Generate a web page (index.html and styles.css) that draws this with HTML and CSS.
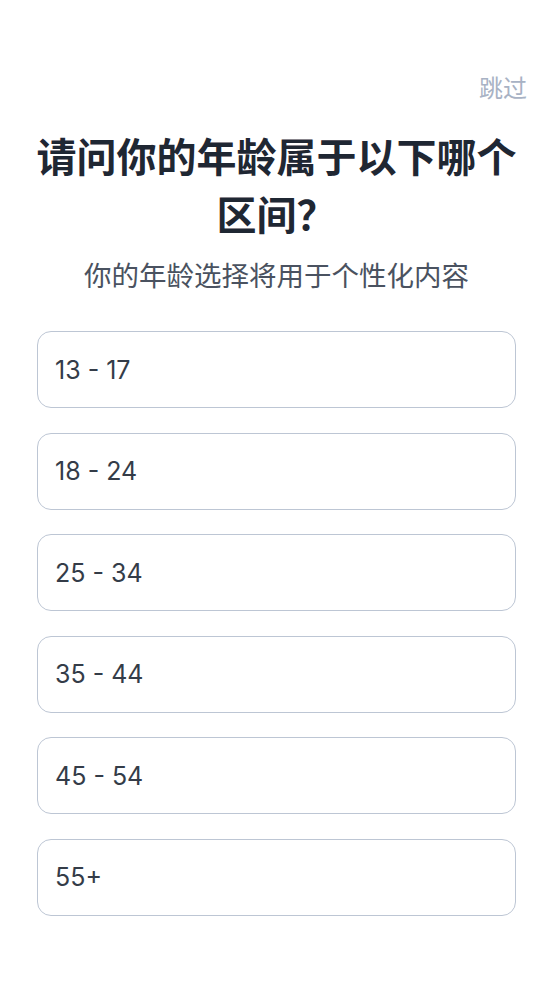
FILE: index.html
```html
<!DOCTYPE html>
<html lang="zh">
<head>
    <meta charset="UTF-8">
    <meta name="viewport" content="width=device-width, initial-scale=1.0">
    <title>年龄区间</title>
    <link rel="stylesheet" href="styles.css">
</head>
<body>

    <!-- Barra superior -->
    <div class="barra">
        <span class="saltar">跳过</span>
    </div>

    <!-- Pregunta -->
    <div class="cabecera">
        <h1>请问你的年龄属于以下哪个区间？</h1>
        <p>你的年龄选择将用于个性化内容</p>
    </div>

    <!-- Opciones de edad -->
    <div class="opciones">
        <button class="opcion">13 - 17</button>
        <button class="opcion">18 - 24</button>
        <button class="opcion">25 - 34</button>
        <button class="opcion">35 - 44</button>
        <button class="opcion">45 - 54</button>
        <button class="opcion">55+</button>
    </div>

</body>
</html>
```

FILE: styles.css
```css
body {
    font-family: Inter, "Noto Sans CJK SC", sans-serif;
    background-color: #ffffff;
    margin: 0;
    padding: 0;
}
.barra {
    display: flex;
    justify-content: flex-end;
    padding: 70px 26px 0 0;
    height: 34px;
}
.saltar {
    font-family: "Noto Sans CJK SC", sans-serif;
    font-size: 24px;
    line-height: 34px;
    color: #a8b2c4;
}
.cabecera {
    text-align: center;
    padding: 0 36px;
}
.cabecera h1 {
    font-family: "Noto Sans CJK SC", sans-serif;
    font-size: 40px;
    font-weight: 700;
    line-height: 58px;
    color: #1f2733;
    margin: 22px 0 0 0;
}
.cabecera p {
    font-family: "Noto Sans CJK SC", sans-serif;
    font-size: 27.5px;
    line-height: 40px;
    color: #4a5260;
    margin: 12px 0 0 0;
}
.opciones {
    display: flex;
    flex-direction: column;
    gap: 24.6px;
    padding: 37px 37px 0 37px;
}
.opcion {
    height: 77px;
    text-align: left;
    padding: 0 0 0 17px;
    font-family: Inter, sans-serif;
    font-size: 25px;
    color: #343c48;
    background-color: #ffffff;
    border: 1.5px solid #bdc6d4;
    border-radius: 14px;
    cursor: pointer;
}
```
